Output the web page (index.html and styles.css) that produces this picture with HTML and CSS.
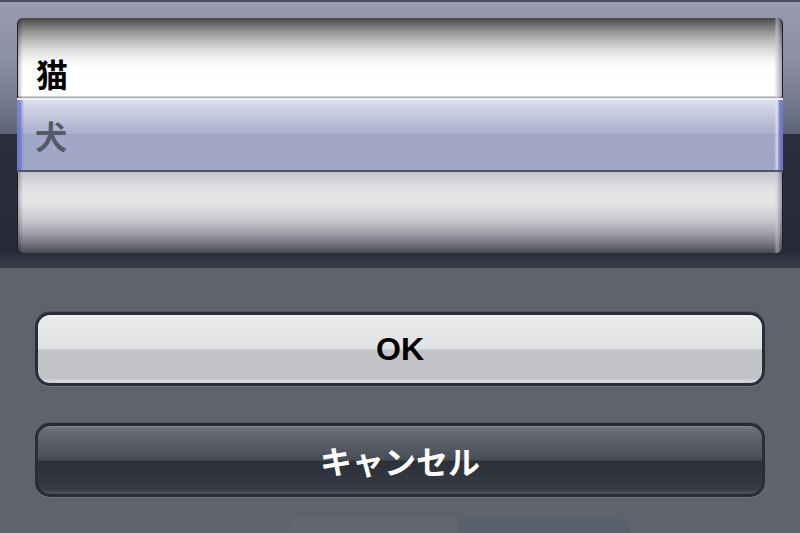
FILE: index.html
```html
<!DOCTYPE html>
<html lang="ja">
<head>
<meta charset="utf-8">
<title>Picker</title>
<link rel="stylesheet" href="styles.css">
</head>
<body>
<div class="picker">
  <div class="topline"></div>
  <div class="frame">
    <div class="wheel">
      <div class="row row-top"><span class="item item-top">猫</span></div>
      <div class="row selection"><span class="item item-sel">犬</span></div>
      <div class="row row-bottom"></div>
    </div>
  </div>
</div>
<div class="sheet">
  <div class="btn btn-ok"><span class="btn-label">OK</span></div>
  <div class="btn btn-cancel"><span class="btn-label">キャンセル</span></div>
  <div class="ghost">
    <span class="seg seg-a"></span><span class="seg seg-b"></span>
  </div>
</div>
</body>
</html>
```

FILE: styles.css
```css
html, body {
  margin: 0;
  padding: 0;
}
body {
  width: 800px;
  height: 533px;
  overflow: hidden;
  background: #5f636e;
  font-family: "Noto Sans CJK JP", "Noto Sans", sans-serif;
}

.picker {
  display: flex;
  flex-direction: column;
}
.topline {
  height: 2px;
  background: #4b4f5b;
}
.frame {
  height: 266px;
  box-sizing: border-box;
  padding: 16px 17px 15px;
  background: linear-gradient(to bottom, #989cae 0, #8d91a4 20%, #74798c 38%, #5e6376 49.6%, #2c2e3c 49.6%, #272936 94%, #30323f 96%, #3a3c49 100%);
}
.wheel {
  height: 235px;
  display: flex;
  flex-direction: column;
}
.row {
  box-sizing: border-box;
  padding-left: 18px;
}
.row-top {
  height: 80px;
  padding-top: 39px;
  border-radius: 6px 6px 0 0;
  border-left: 1px solid #1e1e24;
  border-right: 1px solid #1e1e24;
  background:
    linear-gradient(to right, rgba(0,0,0,.25) 0, rgba(0,0,0,0) 5px, rgba(0,0,0,0) calc(100% - 8px), rgba(200,200,225,.6) calc(100% - 5px), rgba(40,40,60,.4) 100%),
    linear-gradient(to bottom, #474747 0, #8b8b8b 12px, #b8b8b8 22px, #dcdcdc 32px, #f5f5f5 42px, #fefefe 50px, #ffffff 78px, #a8a8b0 79px);
}
.selection {
  height: 74px;
  display: flex;
  align-items: center;
  border-top: 2px solid #eceef4;
  border-bottom: 2px solid #51556a;
  background:
    linear-gradient(to right, rgba(95,105,200,.75) 0, rgba(95,105,200,.75) 3px, rgba(95,105,200,0) 7px, rgba(255,255,255,0) calc(100% - 9px), rgba(230,232,248,.7) calc(100% - 6px), rgba(105,115,195,.9) calc(100% - 3px), rgba(105,115,195,.9) 100%),
    linear-gradient(to bottom, #dde0ee 0, #c6cadf 14px, #acb1cc 33px, #a1a7c7 34px, #a0a6c6 100%);
}
.row-bottom {
  height: 81px;
  border-radius: 0 0 6px 6px;
  border-left: 1px solid #1e1e24;
  border-right: 1px solid #1e1e24;
  background:
    linear-gradient(to right, rgba(0,0,0,.25) 0, rgba(0,0,0,0) 5px, rgba(0,0,0,0) calc(100% - 8px), rgba(200,200,225,.5) calc(100% - 5px), rgba(40,40,60,.4) 100%),
    linear-gradient(to bottom, #c4c5c9 0, #dcdde0 13px, #e4e5e7 23px, #e1e2e4 33px, #c6c7cb 48px, #9a9ba2 63px, #6e6f78 73px, #4a4a54 81px);
}
.item {
  display: block;
  font-size: 32px;
  line-height: 32px;
  font-weight: 700;
}
.item-top {
  color: #000000;
}
.item-sel {
  color: #555a69;
}

.sheet {
  display: flex;
  flex-direction: column;
  padding: 44px 35px 0;
  gap: 37px;
}
.btn {
  height: 74px;
  box-sizing: border-box;
  border: 3px solid #2a2d35;
  border-radius: 15px;
  display: flex;
  align-items: center;
  justify-content: center;
  box-shadow: 0 1px 0 rgba(255,255,255,.12), 0 -1px 0 rgba(0,0,0,.15);
}
.btn-ok {
  background: linear-gradient(to bottom, #f1f1f3 0, #e8e9eb 2px, #e2e3e5 32px, #dddee1 34px, #c3c4c7 35px, #c1c2c5 64px, #d8d9dc 65px, #cfd0d3 100%);
}
.btn-ok .btn-label {
  font-family: "Liberation Sans", Arial, sans-serif;
  font-size: 32px;
  font-weight: 700;
  color: #000000;
}
.btn-cancel {
  background: linear-gradient(to bottom, #878b94 0, #6c707a 2px, #5b5f69 16px, #474c57 34px, #2b3039 35px, #30353f 50px, #363b45 64px, #4a4e58 66px);
}
.btn-cancel .btn-label {
  font-size: 32px;
  font-weight: 700;
  color: #ffffff;
  line-height: 1;
}

.ghost {
  display: flex;
  margin: -16px 0 0 252px;
}
.seg {
  display: block;
  height: 30px;
}
.seg-a {
  width: 171px;
  border-radius: 14px 0 0 0;
  background: #646772;
}
.seg-b {
  width: 172px;
  border-radius: 0 14px 0 0;
  background: #5a5f6c;
}
```
